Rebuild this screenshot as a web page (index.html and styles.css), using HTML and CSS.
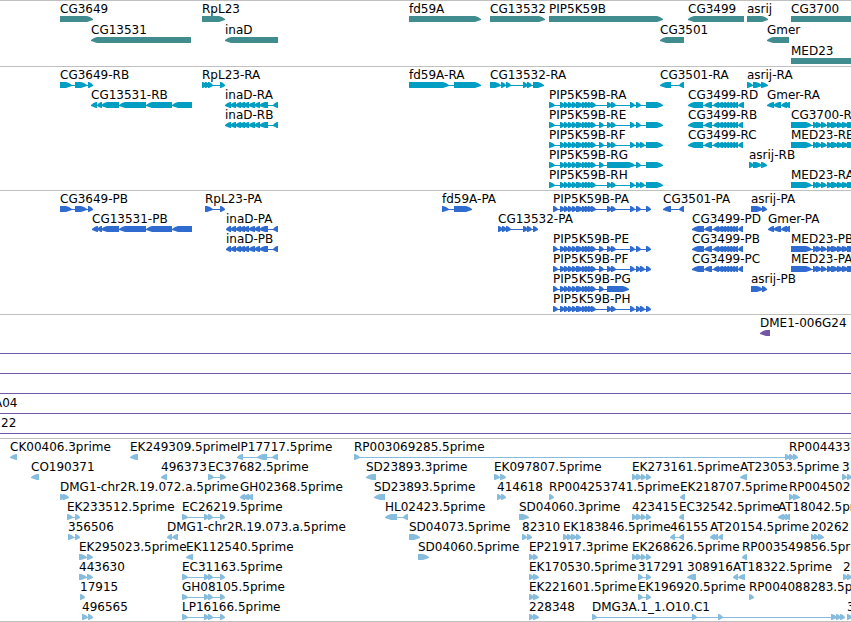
FILE: index.html
```html
<!doctype html>
<html lang="en">
  <head>
    <meta charset="UTF-8" />
    <meta name="viewport" content="width=device-width, initial-scale=1.0" />
    <title>Genome browser</title>
    <link rel="stylesheet" href="styles.css">
  </head>

  <body>
    <main class="browser">
      <section class="track genes" id="genes" aria-label="Genes"></section>
      <section class="track transcripts" id="transcripts" aria-label="Transcripts"></section>
      <section class="track proteins" id="proteins" aria-label="Proteins"></section>
      <section class="track clones" id="clones" aria-label="Clones"></section>
      <section class="track ests" id="ests" aria-label="ESTs"></section>
    </main>
    <script src="script.js"></script>
  </body>
</html>
```
FILE: styles.css
```css
body {
  margin: 0;
  background-color: white;
  color: black;
  font-family: "DejaVu Sans", Verdana, sans-serif;
  font-size: 12px;
}

.browser {
  overflow: hidden;
}

.track {
  border-top: 1px solid #c0c0c0;
  padding: 2px 0 1px;
}

.track:last-child {
  border-bottom: 1px solid #c0c0c0;
  padding-bottom: 0;
}

.lane {
  position: relative;
  height: 20px;
}

/* features sit at their position along the sequence */
.feature {
  position: absolute;
  top: 0;
}

.label {
  display: block;
  color: black;
  line-height: 13px;
  white-space: nowrap;
}

.glyph {
  display: block;
  height: 6px;
  fill: currentColor;
  overflow: visible;
}

.genes {
  color: #408c8f;
  padding-bottom: 0;
}

.genes .lane {
  height: 21px;
}

.transcripts {
  color: #009ec2;
}

.proteins {
  color: #306ccf;
}

.clones {
  color: #7356a6;
}

.ests {
  color: #86bcdd;
}

/* clone that runs past both edges of the view */
.through {
  width: 100%;
  height: 1px;
  position: absolute;
  top: 16px;
  background-color: currentColor;
}
```
FILE: script.js
```js
// each lane is a list of "label strand exon exon ...", exon = start-end
var pipStart = "560-565 564-569 568-573 572-577 576-584 582-587 585-590 588-593 591-596";
var cg3499 = "704-712 713-719 717-723 721-726 724-729 727-732 730-735 733-738";
var med23 = "791-812 813-818 816-822 821-827 827-833 831-839 837-844 842-849 847-856";
var cg13531 = "97-102 101-119 119-146 146-172 172-192";
var inaD = "230-236 235-241 239-245 243-249 248-255 254-260 259-268 273-278";
var ek = "632-637 636-642 641-646 646-651";
var ec = "182-188 204-209 208-213 220-225";

var tracks = {
  genes: [
    [
      "CG3649 + 60-93",
      "RpL23 + 202-225",
      "fd59A + 409-481",
      "CG13532 + 490-545",
      "PIP5K59B + 549-663",
      "CG3499 - 688-744",
      "asrij + 747-768",
      "CG3700 + 791-870",
    ],
    ["CG13531 - 91-191", "inaD - 225-278", "CG3501 - 660-684", "Gmer - 767-789"],
    ["MED23 + 791-890"],
  ],
  transcripts: [
    [
      "CG3649-RB + 60-72 75-87 88-93",
      "RpL23-RA + 202-207 205-210 208-213 220-225",
      "fd59A-RA + 409-449 454-481",
      "CG13532-RA + 490-501 501-506 506-511 523-528 527-532 533-544",
      "CG3501-RA - 660-671 679-684",
      "asrij-RA + 747-753 753-762 761-768",
    ],
    [
      "CG13531-RB - 91-97 " + cg13531,
      "inaD-RA - 225-231 " + inaD,
      "PIP5K59B-RA + 549-555 " + pipStart + " 607-612 611-616 630-635 636-641 646-663",
      "CG3499-RD - 688-703 " + cg3499 + " 738-744",
      "Gmer-RA - 767-774 773-781 781-787 785-790",
    ],
    [
      "inaD-RB - 225-231 " + inaD,
      "PIP5K59B-RE + 549-555 " + pipStart + " 599-604 607-612 611-616 630-635 636-641 646-663",
      "CG3499-RB - 688-703 " + cg3499 + " 738-743",
      "CG3700-RA + " + med23,
    ],
    [
      "PIP5K59B-RF + 549-555 " + pipStart + " 599-604 607-612 611-616 630-635 636-641 640-645 646-663",
      "CG3499-RC - 688-703 " + cg3499 + " 738-743",
      "MED23-RB + " + med23,
    ],
    [
      "PIP5K59B-RG + 549-555 " + pipStart + " 599-604 607-635 636-641 646-663",
      "asrij-RB + 749-754 753-762 761-767",
    ],
    [
      "PIP5K59B-RH + 549-555 " + pipStart + " 607-612 611-616 630-635 636-641 640-645 646-663",
      "MED23-RA + " + med23,
    ],
  ],
  proteins: [
    [
      "CG3649-PB + 60-72 75-87 88-93",
      "RpL23-PA + 205-213 220-225",
      "fd59A-PA + 442-449 454-472",
      "PIP5K59B-PA + 553-558 " + pipStart + " 607-612 611-616 630-635 636-641 646-651",
      "CG3501-PA - 663-671 679-684",
      "asrij-PA + 751-763 762-767",
    ],
    [
      "CG13531-PB - 92-98 " + cg13531,
      "inaD-PA - 226-231 " + inaD,
      "CG13532-PA + 498-503 502-507 506-511 523-528 527-532 533-538",
      "CG3499-PD - 692-704 " + cg3499 + " 738-743",
      "Gmer-PA - 768-774 773-781 781-787 785-790",
    ],
    [
      "inaD-PB - 226-231 " + inaD,
      "PIP5K59B-PE + 553-558 " + pipStart + " 599-604 607-612 611-616 630-635 636-641 646-651",
      "CG3499-PB - 692-704 " + cg3499 + " 738-743",
      "MED23-PB + " + med23,
    ],
    [
      "PIP5K59B-PF + 553-558 " + pipStart + " 599-604 607-612 611-616 630-635 636-641 640-645 646-651",
      "CG3499-PC - 692-704 " + cg3499 + " 738-743",
      "MED23-PA + " + med23,
    ],
    [
      "PIP5K59B-PG + 553-558 " + pipStart + " 599-604 607-629",
      "asrij-PB + 751-763 762-767",
    ],
    [
      "PIP5K59B-PH + 553-558 " + pipStart + " 607-612 611-616 630-635 636-641 640-645 646-651",
    ],
  ],
  clones: [
    ["DME1-006G24 - 760-770"],
    ["through"],
    ["through"],
    ["through"],
    ["A04 = -6", "through"],
    ["22 = 1", "through"],
  ],
  ests: [
    [
      "CK00406.3prime - 10-17",
      "EK249309.5prime - 130-138",
      "IP17717.5prime - 237-243 257-267 272-278",
      "RP003069285.5prime + 354-360 785-790",
      "RP004433 + 789-794 793-798",
    ],
    [
      "CO190371 - 31-39",
      "496373 - 161-167",
      "EC37682.5prime + 208-214 220-226",
      "SD23893.3prime - 366-376",
      "EK097807.5prime + 494-500 500-506",
      "EK273161.5prime + " + ek,
      "AT23053.5prime - 740-747",
      "3 + 842-847 847-852",
    ],
    [
      "DMG1-chr2R.19.072.a.5prime + 60-66 63-69",
      "GH02368.5prime - 240-245 243-249 247-253",
      "SD23893.5prime - 374-385",
      "414618 + 497-502 501-506",
      "RP004253741.5prime + 549-554",
      "EK218707.5prime - 680-685",
      "RP004502 + 789-794 793-800",
    ],
    [
      "EK233512.5prime + 67-73 75-80",
      "EC26219.5prime + " + ec,
      "HL02423.5prime - 385-397 403-408",
      "SD04060.3prime + 519-529",
      "423415 + " + ek,
      "EC32542.5prime - 679-684",
      "AT18042.5prime - 778-784 782-787 785-790",
    ],
    [
      "356506 + 68-74 75-80",
      "DMG1-chr2R.19.073.a.5prime - 167-172 172-178",
      "SD04073.5prime + 409-420",
      "82310 + 522-527 527-532",
      "EK183846.5prime + 563-568 567-572 571-577 576-581",
      "46155 - 670-675 679-684",
      "AT20154.5prime - 710-715 713-718 718-723",
      "20262 + 811-815 814-819 818-824",
    ],
    [
      "EK295023.5prime + 79-87 87-93",
      "EK112540.5prime - 186-193",
      "SD04060.5prime + 418-429",
      "EP21917.3prime + 529-534 533-538",
      "EK268626.5prime + " + ek,
      "RP003549856.5prime - 742-747",
    ],
    [
      "443630 + 79-87 87-93",
      "EC31163.5prime + " + ec,
      "EK170530.5prime + 529-534 533-539",
      "317291 + 638-643 646-651",
      "308916 - 687-696",
      "AT18322.5prime - 733-738 738-745",
      "2 + 843-848 847-852",
    ],
    [
      "17915 + 80-85",
      "GH08105.5prime + " + ec,
      "EK221601.5prime + 529-534 533-539",
      "EK196920.5prime + 638-643 646-651",
      "RP004088283.5prime + 749-754",
    ],
    [
      "496565 + 82-88 88-93",
      "LP16166.5prime + " + ec,
      "228348 + 529-534 533-539",
      "DMG3A.1_1.O10.C1 + 592-597 692-697 718-723 831-837 836-841 840-845",
      "3 + 847-852",
    ],
  ],
};

// block with a rounded arrow head on the strand's side
function exonPoints(start, end, strand) {
  var head = Math.min(6, end - start - 1);
  var tip = strand == "+" ? end : start;
  var tail = strand == "+" ? start : end;
  var back = strand == "+" ? -1 : 1;
  var neck = tip + back * head;
  var cheek = tip + (back * head) / 2;

  return `${tail},0 ${neck},0 ${cheek},1 ${tip},3 ${tip},4 ${cheek},5 ${neck},6 ${tail},6`;
}

function drawFeature(text) {
  if (text == "through") return '<div class="through"></div>';

  var parts = text.split(" ");
  var label = `<span class="label">${parts[0]}</span>`;
  var strand = parts[1];

  if (strand == "=")
    return `<div class="feature" style="left: ${parts[2]}px">${label}</div>`;

  var exons = parts.slice(2).map((x) => x.split("-").map(Number));
  var left = exons[0][0];
  var width = exons[exons.length - 1][1] - left;
  var shapes = exons
    .map((x) => `<polygon points="${exonPoints(x[0] - left, x[1] - left, strand)}" />`)
    .join("");

  return `<div class="feature" style="left: ${left}px">${label}
    <svg class="glyph" width="${width}" height="6" aria-hidden="true">
      <rect x="0" y="3" width="${width}" height="1" />${shapes}
    </svg></div>`;
}

for (var name in tracks) {
  document.getElementById(name).innerHTML = tracks[name]
    .map((lane) => `<div class="lane">${lane.map(drawFeature).join("")}</div>`)
    .join("");
}
```
